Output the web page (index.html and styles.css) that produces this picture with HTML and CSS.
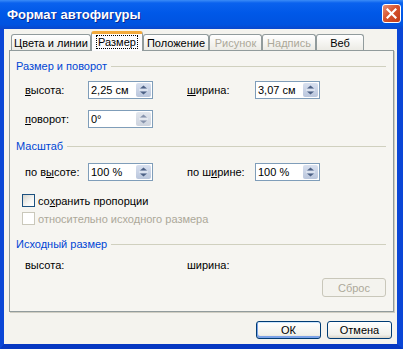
FILE: index.html
```html
<!DOCTYPE html>
<html>
<head>
    <title>Формат автофигуры</title>
    <link rel="stylesheet" href="styles.css">
</head>
<body>
    <div class="window">
        <div class="titlebar">
            <span class="title">Формат автофигуры</span>
            <div class="close">
                <svg width="11" height="11" viewBox="0 0 11 11">
                    <path d="M1.5 1.5 L9.5 9.5 M9.5 1.5 L1.5 9.5" stroke="#fff" stroke-width="2.2" stroke-linecap="square"/>
                </svg>
            </div>
        </div>

        <div class="frame">
            <div class="tabs">
                <div class="tab w1">Цвета и линии</div>
                <div class="tab active w2"><span class="focus">Размер</span></div>
                <div class="tab w3">Положение</div>
                <div class="tab disabled w4">Рисунок</div>
                <div class="tab disabled w5">Надпись</div>
                <div class="tab w6">Веб</div>
            </div>

            <div class="panel">
                <div class="group-title"><span>Размер и поворот</span></div>

                <div class="row first">
                    <span class="label"><u>в</u>ысота:</span>
                    <div class="field">
                        <span>2,25 см</span>
                        <div class="spin">
                            <svg width="15" height="14" viewBox="0 0 15 14">
                                <path d="M4 5.5 L7.5 2.5 L11 5.5 Z" fill="#4d6185"/>
                                <path d="M4 8.5 L7.5 11.5 L11 8.5 Z" fill="#4d6185"/>
                                <path d="M3 7 H12" stroke="#eef2fa" stroke-width="1"/>
                            </svg>
                        </div>
                    </div>
                    <span></span>
                    <span class="label"><u>ш</u>ирина:</span>
                    <div class="field">
                        <span>3,07 см</span>
                        <div class="spin">
                            <svg width="15" height="14" viewBox="0 0 15 14">
                                <path d="M4 5.5 L7.5 2.5 L11 5.5 Z" fill="#4d6185"/>
                                <path d="M4 8.5 L7.5 11.5 L11 8.5 Z" fill="#4d6185"/>
                                <path d="M3 7 H12" stroke="#eef2fa" stroke-width="1"/>
                            </svg>
                        </div>
                    </div>
                </div>

                <div class="row second">
                    <span class="label"><u>п</u>оворот:</span>
                    <div class="field">
                        <span>0°</span>
                        <div class="spin muted">
                            <svg width="15" height="14" viewBox="0 0 15 14">
                                <path d="M4 5.5 L7.5 2.5 L11 5.5 Z" fill="#8794ad"/>
                                <path d="M4 8.5 L7.5 11.5 L11 8.5 Z" fill="#8794ad"/>
                                <path d="M3 7 H12" stroke="#f2f4f8" stroke-width="1"/>
                            </svg>
                        </div>
                    </div>
                </div>

                <div class="group-title gap2"><span>Масштаб</span></div>

                <div class="row third">
                    <span class="label">по в<u>ы</u>соте:</span>
                    <div class="field">
                        <span>100 %</span>
                        <div class="spin">
                            <svg width="15" height="14" viewBox="0 0 15 14">
                                <path d="M4 5.5 L7.5 2.5 L11 5.5 Z" fill="#4d6185"/>
                                <path d="M4 8.5 L7.5 11.5 L11 8.5 Z" fill="#4d6185"/>
                                <path d="M3 7 H12" stroke="#eef2fa" stroke-width="1"/>
                            </svg>
                        </div>
                    </div>
                    <span></span>
                    <span class="label">по ш<u>и</u>рине:</span>
                    <div class="field">
                        <span>100 %</span>
                        <div class="spin">
                            <svg width="15" height="14" viewBox="0 0 15 14">
                                <path d="M4 5.5 L7.5 2.5 L11 5.5 Z" fill="#4d6185"/>
                                <path d="M4 8.5 L7.5 11.5 L11 8.5 Z" fill="#4d6185"/>
                                <path d="M3 7 H12" stroke="#eef2fa" stroke-width="1"/>
                            </svg>
                        </div>
                    </div>
                </div>

                <div class="check first-check">
                    <span class="box"></span>
                    <span>со<u>х</u>ранить пропорции</span>
                </div>
                <div class="check disabled">
                    <span class="box"></span>
                    <span>относительно исходного размера</span>
                </div>

                <div class="group-title gap3"><span>Исходный размер</span></div>

                <div class="row plain">
                    <span class="label">высота:</span>
                    <span class="label col4">ширина:</span>
                </div>

                <div class="reset-row">
                    <button class="btn" disabled>Сброс</button>
                </div>
            </div>

            <div class="actions">
                <button class="btn default">ОК</button>
                <button class="btn">Отмена</button>
            </div>
        </div>
    </div>
</body>
</html>
```

FILE: styles.css
```css
body {
    margin: 0;
    font-family: "Liberation Sans", Arial, sans-serif;
    font-size: 11px;
    color: #000;
    background-color: #fff;
}

.window {
    width: 403px;
    height: 349px;
    display: flex;
    flex-direction: column;
}

.titlebar {
    height: 29px;
    flex: none;
    display: flex;
    align-items: center;
    justify-content: space-between;
    padding: 0 2px 0 7px;
    box-sizing: border-box;
    background: linear-gradient(to bottom, #3b8cf7 0, #0a62ee 3px, #0058e8 45%, #0053e0 85%, #0a47cc 100%);
}

.title {
    color: #fff;
    font-weight: bold;
    font-size: 13px;
    text-shadow: 1px 1px 0 #0b2a90;
}

.close {
    width: 19px;
    height: 19px;
    margin-top: -2px;
    display: flex;
    align-items: center;
    justify-content: center;
    border: 1px solid #fff;
    border-radius: 3px;
    background: linear-gradient(135deg, #e8937a, #d6532f 45%, #c13b16);
    box-sizing: border-box;
}

.frame {
    flex: 1;
    display: flex;
    flex-direction: column;
    background-color: #f4f3ee;
    border-left: 4px solid #0a46d6;
    border-right: 6px solid #0a46d6;
    border-bottom: 5px solid #0638c2;
}

/* tabs */
.tabs {
    height: 22px;
    display: flex;
    align-items: flex-end;
    padding-left: 7px;
    margin-bottom: -1px;
    position: relative;
    z-index: 1;
}

.tab {
    height: 16px;
    margin-bottom: 1px;
    display: flex;
    align-items: center;
    justify-content: center;
    box-sizing: border-box;
    border: 1px solid #919b9c;
    border-bottom: none;
    border-radius: 3px 3px 0 0;
    background: linear-gradient(to bottom, #fff, #ecebe5);
    white-space: nowrap;
}

.tab.disabled {
    color: #aca899;
}

.tab.active {
    height: 20px;
    margin-bottom: 0;
    border-top: 3px solid #f2a93b;
    background: #fcfcfe;
    padding-bottom: 2px;
}

.focus {
    outline: 1px dotted #000;
    padding: 0 1px;
}

.w1 { width: 80px; }
.w2 { width: 52px; }
.w3 { width: 66px; }
.w4 { width: 53px; }
.w5 { width: 54px; }
.w6 { width: 48px; }

/* panel */
.panel {
    width: 385px;
    height: 262px;
    margin-left: 5px;
    box-sizing: border-box;
    border: 1px solid #919b9c;
    box-shadow: 1px 1px 0 #d0cec3;
    padding: 9px 7px 0 6px;
    background-color: #f6f5f1;
}

.group-title {
    display: flex;
    align-items: center;
    gap: 4px;
    height: 13px;
    line-height: 13px;
    color: #0046d5;
}

.group-title::after {
    content: "";
    flex: 1;
    height: 1px;
    background-color: #d0d0bf;
}

.gap2 { margin-top: 12px; }
.gap3 { margin-top: 13px; }

.row {
    display: grid;
    grid-template-columns: 63px 65px 34px 68px 65px;
    align-items: center;
    height: 18px;
    padding-left: 9px;
}

.row.first { margin-top: 8px; }
.row.second { margin-top: 11px; }
.row.third { margin-top: 10px; }
.row.plain { margin-top: 7px; height: 13px; }

.col4 { grid-column: 4; }

.field {
    height: 18px;
    box-sizing: border-box;
    display: flex;
    align-items: center;
    justify-content: space-between;
    padding: 0 1px 0 2px;
    border: 1px solid #7f9db9;
    background-color: #fff;
}

.spin {
    width: 15px;
    height: 14px;
    border-radius: 2px;
    background: linear-gradient(to bottom, #d8e0ef, #bac6dc);
    display: flex;
}

.spin.muted {
    background: linear-gradient(to bottom, #e3e7ee, #cdd3de);
}

.check {
    display: flex;
    align-items: center;
    gap: 3px;
    height: 13px;
    padding-left: 6px;
    margin-top: 5px;
}

.check.first-check { margin-top: 13px; }

.box {
    width: 13px;
    height: 13px;
    box-sizing: border-box;
    border: 1px solid #1c5180;
    background: linear-gradient(135deg, #d6d5cd, #f6f6f4 60%, #fff);
}

.check.disabled {
    color: #aca899;
}

.check.disabled .box {
    border-color: #cac8bb;
    background: #fff;
}

.reset-row {
    display: flex;
    justify-content: flex-end;
    margin-top: 7px;
}

/* buttons */
.btn {
    width: 65px;
    height: 18px;
    padding: 0;
    font-family: inherit;
    font-size: 11px;
    color: #000;
    border: 1px solid #003c74;
    border-radius: 3px;
    background: linear-gradient(to bottom, #fff, #f0f0ea 80%, #d8d2c6);
}

.btn:disabled {
    width: 64px;
    height: 19px;
    color: #aca899;
    border-color: #c9c7ba;
    background: #f4f3ee;
}

.btn.default {
    box-shadow: inset 1px -2px 0 #7ba2e7, inset 0 1px 0 #cee7ff;
}

.actions {
    display: flex;
    justify-content: flex-end;
    gap: 6px;
    padding: 9px 5px 0 0;
}
```
